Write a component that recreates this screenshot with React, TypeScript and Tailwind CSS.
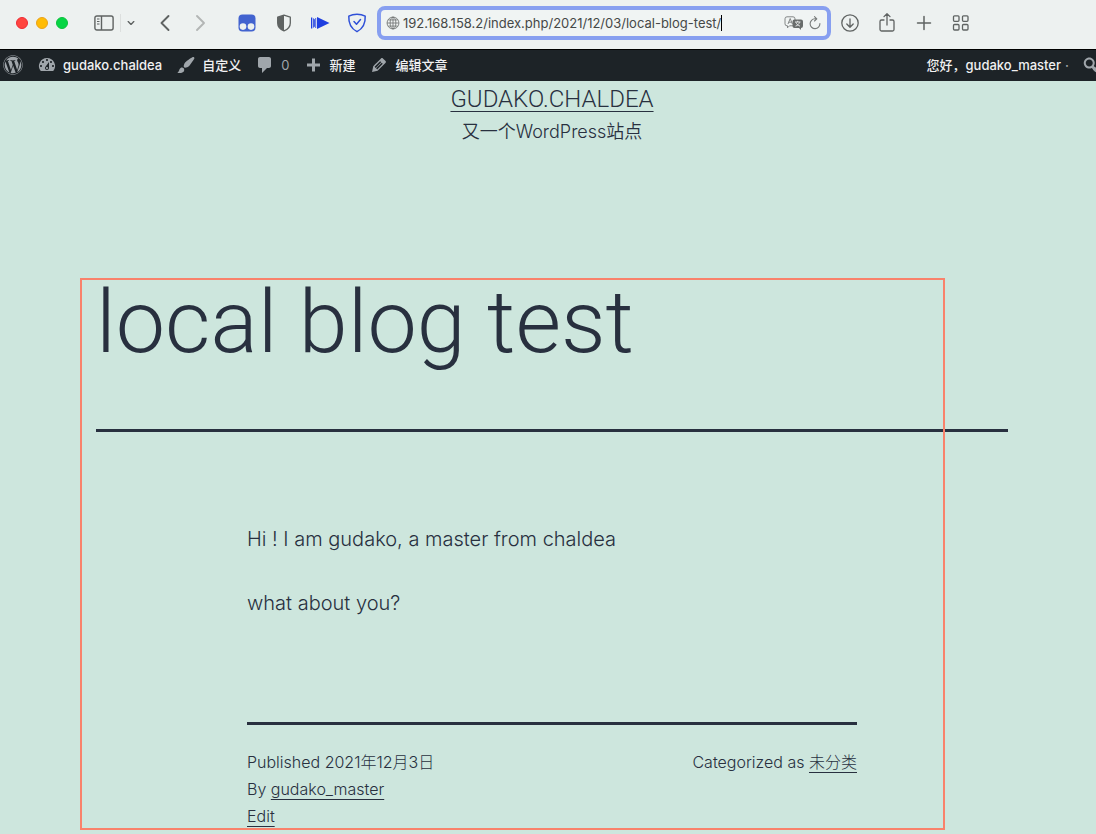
import type { ReactNode } from "react";
import { FaWordpress } from "react-icons/fa";

function Dashicon({ d, className }: { d: string; className: string }) {
  return (
    <svg viewBox="0 0 20 20" fill="currentColor" fillRule="evenodd" aria-hidden="true" className={className}>
      <path d={d} />
    </svg>
  );
}

const icons = {
  dashboard:
    "M3.76 16h12.48A7.998 7.998 0 0 0 10 3a7.998 7.998 0 0 0-6.24 13zM10 4c.55 0 1 .45 1 1s-.45 1-1 1-1-.45-1-1 .45-1 1-1zM6 6c.55 0 1 .45 1 1s-.45 1-1 1-1-.45-1-1 .45-1 1-1zm8 0c.55 0 1 .45 1 1s-.45 1-1 1-1-.45-1-1 .45-1 1-1zm-5.37 5.55L12 7v6c0 1.1-.9 2-2 2s-2-.9-2-2c0-.57.24-1.08.63-1.45zM4 10c.55 0 1 .45 1 1s-.45 1-1 1-1-.45-1-1 .45-1 1-1zm12 0c.55 0 1 .45 1 1s-.45 1-1 1-1-.45-1-1 .45-1 1-1zm-5 3c0-.55-.45-1-1-1s-1 .45-1 1 .45 1 1 1 1-.45 1-1z",
  brush:
    "M18.33 3.57s.27-.8-.31-1.36c-.53-.52-1.22-.24-1.22-.24-.61.3-5.76 3.47-7.67 5.57-.86.96-2.06 3.79-1.09 4.82.92.98 3.96-.17 4.79-1 2.06-2.06 5.21-7.17 5.5-7.79zM1.4 17.65c2.37-1.56 1.46-3.41 3.23-4.64.93-.65 2.22-.62 3.08.29.63.67.8 2.57-.16 3.46-1.57 1.45-4 1.55-6.15.89z",
  comment:
    "M5 2h9c1.1 0 2 .9 2 2v7c0 1.1-.9 2-2 2h-2l-5 5v-5H5c-1.1 0-2-.9-2-2V4c0-1.1.9-2 2-2z",
  plus: "M17 8.5v3h-5v5H9v-5H4v-3h5v-5h3v5h5z",
  edit: "M13.89 3.39l2.71 2.72c.46.46.42 1.24.03 1.64l-8.01 8.02-5.56 1.16 1.16-5.58s7.6-7.63 7.99-8.03c.39-.39 1.22-.39 1.68.07zm-2.73 2.79l-5.59 5.61 1.11 1.11 5.54-5.65zm-2.97 8.23l5.58-5.6-1.07-1.08-5.59 5.6z",
  search:
    "M12.14 4.18c1.87 1.87 2.11 4.75.72 6.89.12.1.22.21.36.31.2.16.47.36.81.59.34.24.56.39.66.47.42.31.73.57.94.78.32.32.6.65.84 1 .25.35.44.69.59 1.04.14.35.21.68.18 1-.02.32-.14.59-.36.81s-.49.34-.81.36c-.31.02-.65-.04-.99-.19-.35-.14-.7-.34-1.04-.59-.35-.24-.68-.52-1-.84-.21-.21-.47-.52-.77-.93-.1-.13-.25-.35-.47-.66-.22-.32-.4-.57-.56-.78-.16-.2-.29-.35-.44-.5-2.07 1.09-4.69.76-6.44-.98-2.14-2.15-2.14-5.64 0-7.78 2.15-2.15 5.63-2.15 7.78 0zm-1.41 6.36c1.36-1.37 1.36-3.58 0-4.95-1.37-1.37-3.59-1.37-4.95 0-1.37 1.37-1.37 3.58 0 4.95 1.36 1.37 3.58 1.37 4.95 0z",
};

function ToolButton({ label, className = "", children }: { label: string; className?: string; children: ReactNode }) {
  return (
    <button type="button" aria-label={label} className={`flex h-6 w-6 shrink-0 items-center justify-center text-[#5f6362] ${className}`}>
      {children}
    </button>
  );
}

function Line({ d, size = "h-5 w-5", width = 1.3 }: { d: string; size?: string; width?: number }) {
  return (
    <svg viewBox="0 0 20 20" fill="none" stroke="currentColor" strokeWidth={width} strokeLinecap="round" strokeLinejoin="round" aria-hidden="true" className={size}>
      <path d={d} />
    </svg>
  );
}

function BrowserBar() {
  return (
    <header className="flex h-[50px] items-center border-b border-black bg-[#edf1f0] pb-1 pl-4 font-['Inter',sans-serif]">
      <div className="flex shrink-0 gap-2">
        <button type="button" aria-label="Close" className="h-3 w-3 rounded-full border border-[#ee2b35] bg-[#ff453f]" />
        <button type="button" aria-label="Minimize" className="h-3 w-3 rounded-full border border-[#eaa21a] bg-[#ffbc05]" />
        <button type="button" aria-label="Zoom" className="h-3 w-3 rounded-full border border-[#0cc13c] bg-[#06d544]" />
      </div>
      <ToolButton label="Sidebar" className="ml-6">
        <svg viewBox="0 0 20 16" fill="none" stroke="currentColor" strokeWidth="1.4" aria-hidden="true" className="h-4 w-5">
          <rect x="0.9" y="1" width="18.2" height="14" rx="2" />
          <path d="M7.5 1v14" />
          <path d="M3 4h2.5M3 6.5h2.5M3 9h2.5" strokeWidth="1.1" />
        </svg>
      </ToolButton>
      <div className="ml-1 h-[18px] w-px shrink-0 bg-[#dcdfde]" />
      <ToolButton label="Tab groups" className="-ml-1">
        <span className="pl-1"><Line d="M3 6.500l7 7 7-7" size="h-2 w-2" width={3.4} /></span>
      </ToolButton>
      <ToolButton label="Back" className="ml-3">
        <Line d="M13.500 3L6.500 10l7 7" width={1.9} />
      </ToolButton>
      <ToolButton label="Forward" className="ml-3 text-[#b3b6b5]">
        <Line d="M6 3l7 7-7 7" width={1.9} />
      </ToolButton>
      <ToolButton label="Tampermonkey" className="ml-[22px]">
        <svg viewBox="0 0 18 18" aria-hidden="true" className="h-[18px] w-[18px]">
          <rect x="0.5" y="0.5" width="17" height="17" rx="4" fill="#4263cf" />
          <circle cx="5" cy="12.6" r="3.3" fill="#edf1f0" />
          <circle cx="13" cy="12.6" r="3.3" fill="#edf1f0" />
        </svg>
      </ToolButton>
      <ToolButton label="Privacy report" className="ml-[13px]">
        <svg viewBox="0 0 16 18" aria-hidden="true" className="h-[18px] w-4">
          <path d="M8 1.200 14.300 3.200V9c0 3.600-2.600 6.400-6.300 7.800C4.300 15.400 1.700 12.600 1.700 9V3.200Z" fill="none" stroke="#5f6362" strokeWidth="1.300" strokeLinejoin="round" />
          <path d="M8 1.200V16.800C4.300 15.400 1.700 12.600 1.700 9V3.200Z" fill="#5f6362" />
        </svg>
      </ToolButton>
      <ToolButton label="Speed" className="ml-3">
        <svg viewBox="0 0 20 14" fill="#1f3fe0" aria-hidden="true" className="h-[14px] w-5">
          <path d="M1 1.500h1.300v11H1zM3.200 2l1.600 1.500v7L3.200 12zM7 1 19.500 7 7 13z" />
          <path d="M5.700 2v10" stroke="#1f3fe0" strokeWidth="0.800" />
        </svg>
      </ToolButton>
      <ToolButton label="Shield" className="ml-[13px]">
        <svg viewBox="0 0 20 20" fill="none" stroke="#2f50d8" strokeWidth="1.500" strokeLinejoin="round" strokeLinecap="round" aria-hidden="true" className="h-5 w-5">
          <path d="M10 1.300c3 0 5.800.6 8.200 1.800C18.600 10.500 16 15.500 10 18.700 4 15.500 1.400 10.500 1.800 3.100 4.200 1.900 7 1.300 10 1.300z" />
          <path d="M7 8.500l2.500 2.700 4-4.700" />
        </svg>
      </ToolButton>
      <div className="ml-2 flex h-[34px] w-[454px] min-w-0 shrink items-center rounded-lg border-4 border-[#879ff0] bg-[#f0f4f3] px-[5px]">
        <svg viewBox="0 0 16 16" fill="none" stroke="#686c6b" strokeWidth="0.900" aria-hidden="true" className="h-[14px] w-[14px] shrink-0">
          <circle cx="8" cy="8" r="6.800" />
          <ellipse cx="8" cy="8" rx="3.300" ry="6.800" />
          <path d="M8 1.200v13.600M1.200 8h13.600M2.500 4.500h11M2.500 11.500h11" />
        </svg>
        <input
          type="text"
          aria-label="Address"
          defaultValue="192.168.158.2/index.php/2021/12/03/local-blog-test/"
          className="ml-[3px] min-w-0 bg-transparent text-[13px] leading-5 text-[#454847] outline-none [field-sizing:content]"
        />
        <span className="h-4 w-px shrink-0 bg-black" />
        <button type="button" aria-label="Translate" className="ml-auto shrink-0">
          <svg viewBox="0 0 20 14" aria-hidden="true" className="h-[14px] w-5">
            <path d="M3 .8h6a2 2 0 0 1 2 2v5a2 2 0 0 1-2 2H5.500L3.500 11.800V9.800H3a2 2 0 0 1-2-2v-5a2 2 0 0 1 2-2z" fill="none" stroke="#777b7a" strokeWidth="0.900" />
            <path d="M4 8l2.200-5.500L8.400 8M4.700 6.200h3" fill="none" stroke="#777b7a" strokeWidth="0.900" />
            <path d="M10.500 3.500H17a2 2 0 0 1 2 2V10a2 2 0 0 1-2 2v1.900L15 12h-4.500a2 2 0 0 1-2-2V5.500a2 2 0 0 1 2-2z" fill="#686c6b" />
            <path d="M11 6h5.500M13.700 4.800V6M12 6.300c.6 2 2 3.200 4 3.800M15.500 6.300c-.6 2-2 3.200-4 3.800" fill="none" stroke="#edf1f0" strokeWidth="0.900" />
          </svg>
        </button>
        <button type="button" aria-label="Reload" className="ml-1 shrink-0 text-[#777b7a]">
          <svg viewBox="0 0 14 14" fill="none" stroke="currentColor" strokeWidth="1.100" strokeLinecap="round" strokeLinejoin="round" aria-hidden="true" className="h-[14px] w-[14px]">
            <path d="M11.900 7.500a4.900 4.900 0 1 1-4.900-4.700h1.500M6.500.6l2.300 2.200L6.500 5" />
          </svg>
        </button>
      </div>
      <ToolButton label="Downloads" className="ml-[7px]">
        <Line d="M10 1.800a8.200 8.200 0 1 0 0 16.400 8.200 8.200 0 0 0 0-16.400zM10 6v8M6.800 11l3.200 3.200 3.200-3.200" />
      </ToolButton>
      <ToolButton label="Share" className="ml-[13px]">
        <Line d="M7 7H4.500a1.500 1.500 0 0 0-1.500 1.500v8A1.500 1.500 0 0 0 4.500 18h11a1.500 1.500 0 0 0 1.500-1.500v-8A1.500 1.500 0 0 0 15.500 7H13M10 12V.8M7 3.600L10 .7l3 2.900" />
      </ToolButton>
      <ToolButton label="New tab" className="ml-[13px]">
        <Line d="M10 3.500v13M3.500 10h13" width={1.5} />
      </ToolButton>
      <ToolButton label="Tab overview" className="ml-[13px]">
        <Line d="M3.500 2.800h3.500a1 1 0 0 1 1 1v3.500a1 1 0 0 1-1 1H3.500a1 1 0 0 1-1-1V3.800a1 1 0 0 1 1-1zM12.500 2.800H16a1 1 0 0 1 1 1v3.500a1 1 0 0 1-1 1h-3.500a1 1 0 0 1-1-1V3.800a1 1 0 0 1 1-1zM3.500 11.500h3.500a1 1 0 0 1 1 1V16a1 1 0 0 1-1 1H3.500a1 1 0 0 1-1-1v-3.500a1 1 0 0 1 1-1zM12.500 11.500H16a1 1 0 0 1 1 1V16a1 1 0 0 1-1 1h-3.500a1 1 0 0 1-1-1v-3.500a1 1 0 0 1 1-1z" />
      </ToolButton>
    </header>
  );
}

function AdminLink({ icon, children }: { icon: string; children: ReactNode }) {
  return (
    <a href="#" className="flex items-center gap-[6px]">
      <Dashicon d={icon} className="h-5 w-5 text-[#a0a6ab]" />
      {children}
    </a>
  );
}

function AdminBar() {
  return (
    <nav className="flex h-[31px] items-center justify-between overflow-hidden bg-[#1d2327] pb-px pl-[3px] font-['Inter','Noto_Sans_CJK_SC',sans-serif] text-[13px] leading-5 font-medium whitespace-nowrap text-[#f0f0f1]">
      <div className="flex items-center gap-[14px]">
        <a href="#" aria-label="WordPress">
          <FaWordpress className="h-5 w-5 text-[#a0a6ab]" />
        </a>
        <AdminLink icon={icons.dashboard}>gudako.chaldea</AdminLink>
        <AdminLink icon={icons.brush}>自定义</AdminLink>
        <AdminLink icon={icons.comment}>
          <span className="font-normal text-[#a0a6ab]">0</span>
        </AdminLink>
        <AdminLink icon={icons.plus}>新建</AdminLink>
        <AdminLink icon={icons.edit}>编辑文章</AdminLink>
      </div>
      <div className="-mr-[5px] flex items-center">
        <a href="#">您好，gudako_master</a>
        <span className="ml-1 text-[#a0a6ab]">·</span>
        <button type="button" aria-label="Search" className="ml-3">
          <Dashicon d={icons.search} className="h-5 w-5 text-[#a0a6ab]" />
        </button>
      </div>
    </nav>
  );
}

export default function App() {
  return (
    <div className="flex min-h-screen flex-col bg-[#cde6dd] font-['Inter','Noto_Sans_CJK_SC',sans-serif] text-[#28303f]">
      <BrowserBar />
      <AdminBar />
      <div className="flex-1 pr-[88px] pl-24">
        <header className="pt-1 text-center">
          <p className="font-['Roboto',sans-serif] text-2xl leading-7 font-[350]">
            <a href="#" className="underline decoration-1 underline-offset-4">GUDAKO.CHALDEA</a>
          </p>
          <p className="mt-[5px] text-lg leading-7 font-[350]">又一个WordPress站点</p>
        </header>
        <article className="relative mt-[132px]">
          <h1 className="border-b-[3px] border-current pb-16 font-['Roboto',sans-serif] text-[88px] leading-[87px] font-light">local blog test</h1>
          <div className="mx-auto max-w-[610px] pt-[91px]">
            <div className="space-y-8 text-xl leading-8 font-[350]">
              <p>Hi ! I am gudako, a master from chaldea</p>
              <p>what about you?</p>
            </div>
            <footer className="mt-[103px] flex justify-between border-t-[3px] border-current pt-6 text-base leading-[27px] font-light">
              <div>
                <p>Published 2021年12月3日</p>
                <p>By <a href="#" className="underline decoration-1 underline-offset-4">gudako_master</a></p>
                <p><a href="#" className="underline decoration-1 underline-offset-4">Edit</a></p>
              </div>
              <p>Categorized as <a href="#" className="underline decoration-1 underline-offset-4">未分类</a></p>
            </footer>
          </div>
          <div className="pointer-events-none absolute inset-y-0 right-[63px] -left-4 border-2 border-[#f9826b]" />
        </article>
      </div>
    </div>
  );
}
